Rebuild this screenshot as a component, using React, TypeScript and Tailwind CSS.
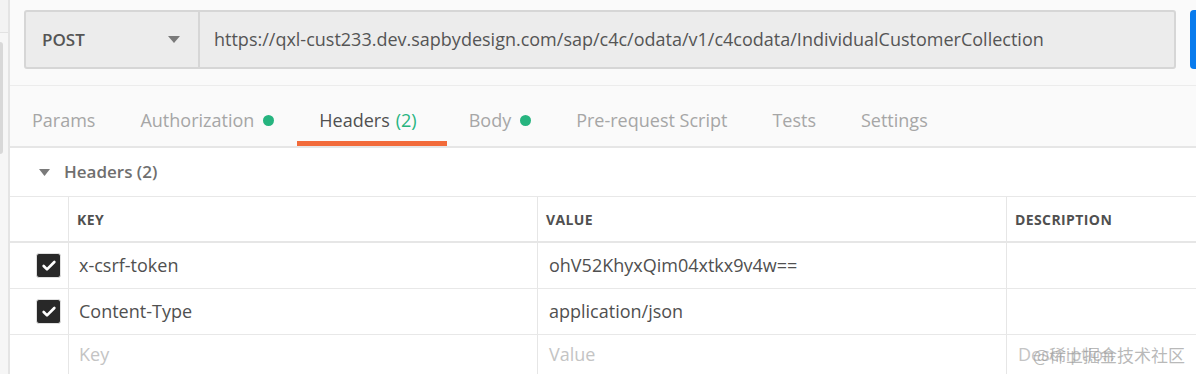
import { Check } from "lucide-react"

const tabs = [
  { label: "Params" },
  { label: "Authorization", dot: true },
  { label: "Headers", count: "(2)", active: true },
  { label: "Body", dot: true },
  { label: "Pre-request Script" },
  { label: "Tests" },
  { label: "Settings" },
]

const rows = [
  { key: "x-csrf-token", value: "ohV52KhyxQim04xtkx9v4w==" },
  { key: "Content-Type", value: "application/json" },
]

export default function App() {
  return (
    <div
      className="flex h-[374px] w-[1196px] overflow-hidden bg-white text-[#505050]"
      style={{ fontFamily: "'Open Sans', 'Noto Sans', sans-serif" }}
    >
      {/* left sidebar edge */}
      <div className="flex w-[10px] shrink-0 flex-col border-r-2 border-[#e4e4e4] bg-[#f6f6f6]">
        <div className="h-[33px] border-b border-[#e2e2e2] bg-[#f3f3f3]" />
        <div className="mt-[9px] h-[112px] w-[3px] rounded-r bg-[#d8d8d8]" />
      </div>

      <div className="flex min-w-0 flex-1 flex-col">
        {/* url bar */}
        <div className="flex h-[86px] shrink-0 border-b border-[#ececec] bg-[#fafafa] pl-[14px] pt-[10px]">
          <div className="flex h-[59px] w-[1152px] shrink-0 rounded-[3px] border-2 border-[#d6d6d6] bg-[#ececec]">
            <div className="flex w-[174px] shrink-0 items-center justify-between border-r-2 border-[#d6d6d6] pl-[16px] pr-[18px]">
              <span className="text-[17px] font-semibold text-[#555]">POST</span>
              <svg width="12" height="7" viewBox="0 0 12 7">
                <path d="M0 0h12L6 7z" fill="#7a7a7a" />
              </svg>
            </div>
            <div className="flex items-center pl-[14px] text-[18px] text-[#555]">
              https://qxl-cust233.dev.sapbydesign.com/sap/c4c/odata/v1/c4codata/IndividualCustomerCollection
            </div>
          </div>
          <div className="ml-[14px] h-[59px] w-[80px] shrink-0 rounded-[4px] bg-[#097bed]" />
        </div>

        {/* tabs */}
        <div className="flex h-[62px] shrink-0 items-stretch border-b-2 border-[#e6e6e6] bg-[#fafafa]">
          {tabs.map((t) => (
            <div
              key={t.label}
              className={`flex items-center gap-[9px] border-b-[5px] pl-[22px] pt-[14px] text-[18px] ${
                t.active
                  ? "border-[#f26b3a] pr-[30px] text-[#505050]"
                  : "border-transparent pr-[23px] text-[#a6a6a6]"
              }`}
            >
              <span>
                {t.label}
                {t.count && <span className="ml-[6px] text-[#26b47f]">{t.count}</span>}
              </span>
              {t.dot && <span className="h-[11px] w-[11px] rounded-full bg-[#26b47f]" />}
            </div>
          ))}
        </div>

        {/* section header */}
        <div className="flex h-[49px] shrink-0 items-center gap-[14px] border-b border-[#e8e8e8] pl-[29px]">
          <svg width="11" height="7" viewBox="0 0 11 7">
            <path d="M0 0h11L5.5 7z" fill="#7a7a7a" />
          </svg>
          <span className="text-[17px] font-semibold text-[#6f6f6f]">Headers (2)</span>
        </div>

        {/* table */}
        <div className="flex h-[46px] shrink-0 border-b-2 border-[#e6e6e6]">
          <div className="w-[59px] shrink-0 border-r border-[#e6e6e6]" />
          <div className="flex w-[469px] shrink-0 items-center border-r border-[#e6e6e6] pl-[8px] text-[14px] font-bold tracking-[0.4px] text-[#505050]">
            KEY
          </div>
          <div className="flex w-[469px] shrink-0 items-center border-r border-[#e6e6e6] pl-[8px] text-[14px] font-bold tracking-[0.4px] text-[#505050]">
            VALUE
          </div>
          <div className="flex flex-1 items-center pl-[8px] text-[14px] font-bold tracking-[0.4px] text-[#505050]">
            DESCRIPTION
          </div>
        </div>

        {rows.map((r) => (
          <div key={r.key} className="flex h-[46px] shrink-0 border-b border-[#e8e8e8]">
            <div className="flex w-[59px] shrink-0 items-center justify-end border-r border-[#e6e6e6] pr-[7px]">
              <div className="flex h-[25px] w-[25px] items-center justify-center rounded-[3px] border border-[#e0e0e0] bg-[#282828]">
                <Check className="h-[16px] w-[16px] text-white" strokeWidth={4} />
              </div>
            </div>
            <div className="flex w-[469px] shrink-0 items-center border-r border-[#e6e6e6] pl-[10px] text-[18px]">
              {r.key}
            </div>
            <div className="flex w-[469px] shrink-0 items-center border-r border-[#e6e6e6] pl-[11px] text-[18px]">
              {r.value}
            </div>
            <div className="flex-1" />
          </div>
        ))}

        <div className="flex flex-1">
          <div className="w-[59px] shrink-0 border-r border-[#e6e6e6]" />
          <div className="flex w-[469px] shrink-0 items-center border-r border-[#e6e6e6] pl-[10px] text-[18px] text-[#c4c4c4]">
            Key
          </div>
          <div className="flex w-[469px] shrink-0 items-center border-r border-[#e6e6e6] pl-[11px] text-[18px] text-[#c4c4c4]">
            Value
          </div>
          <div className="relative flex flex-1 items-center pl-[11px] text-[18px] text-[#c4c4c4]">
            Description
            <span
              className="absolute left-[26px] top-[10px] whitespace-nowrap text-[17px] leading-[20px] text-[#9a9a9a]/70"
              style={{ fontFamily: "'Noto Sans CJK SC', sans-serif" }}
            >
              @稀土掘金技术社区
            </span>
          </div>
        </div>
      </div>
    </div>
  )
}
